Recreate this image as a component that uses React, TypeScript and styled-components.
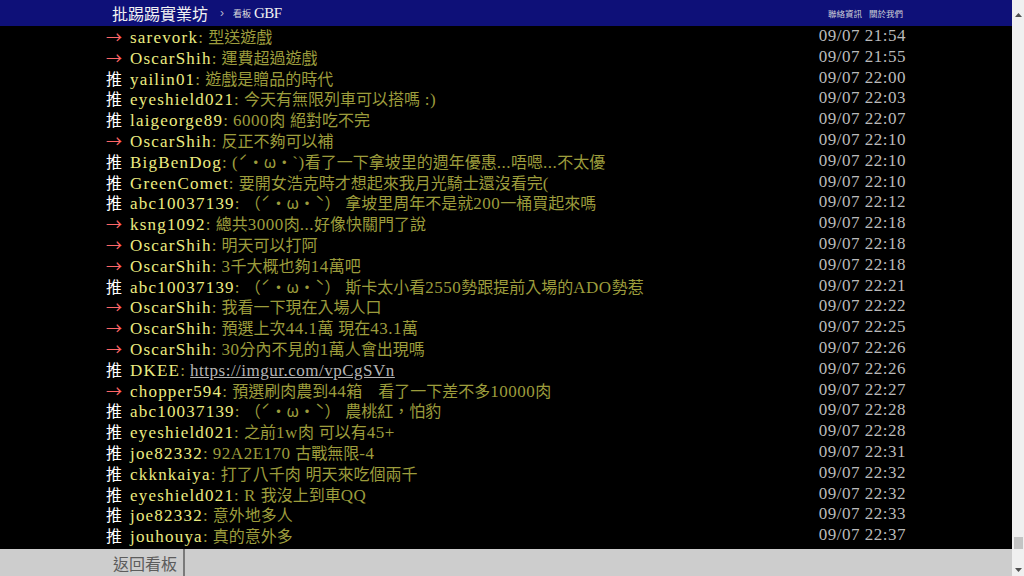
import styled, { createGlobalStyle } from 'styled-components';

const GlobalStyle = createGlobalStyle`
  html, body {
    margin: 0;
    padding: 0;
    background: #000;
    overflow: hidden;
  }
`;

type Push = {
  tag: '推' | '→';
  user: string;
  text: string;
  link?: string;
  time: string;
};

const pushes: Push[] = [
  { tag: '→', user: 'sarevork', text: ': 型送遊戲', time: '09/07 21:54' },
  { tag: '→', user: 'OscarShih', text: ': 運費超過遊戲', time: '09/07 21:55' },
  { tag: '推', user: 'yailin01', text: ': 遊戲是贈品的時代', time: '09/07 22:00' },
  { tag: '推', user: 'eyeshield021', text: ': 今天有無限列車可以搭嗎 :)', time: '09/07 22:03' },
  { tag: '推', user: 'laigeorge89', text: ': 6000肉 絕對吃不完', time: '09/07 22:07' },
  { tag: '→', user: 'OscarShih', text: ': 反正不夠可以補', time: '09/07 22:10' },
  { tag: '推', user: 'BigBenDog', text: ': (ˊ・ω・`)看了一下拿坡里的週年優惠...唔嗯...不太優', time: '09/07 22:10' },
  { tag: '推', user: 'GreenComet', text: ': 要開女浩克時才想起來我月光騎士還沒看完(', time: '09/07 22:10' },
  { tag: '推', user: 'abc10037139', text: ': （ˊ・ω・ˋ） 拿坡里周年不是就200一桶買起來嗎', time: '09/07 22:12' },
  { tag: '→', user: 'ksng1092', text: ': 總共3000肉...好像快關門了說', time: '09/07 22:18' },
  { tag: '→', user: 'OscarShih', text: ': 明天可以打阿', time: '09/07 22:18' },
  { tag: '→', user: 'OscarShih', text: ': 3千大概也夠14萬吧', time: '09/07 22:18' },
  { tag: '推', user: 'abc10037139', text: ': （ˊ・ω・ˋ） 斯卡太小看2550勢跟提前入場的ADO勢惹', time: '09/07 22:21' },
  { tag: '→', user: 'OscarShih', text: ': 我看一下現在入場人口', time: '09/07 22:22' },
  { tag: '→', user: 'OscarShih', text: ': 預選上次44.1萬 現在43.1萬', time: '09/07 22:25' },
  { tag: '→', user: 'OscarShih', text: ': 30分內不見的1萬人會出現嗎', time: '09/07 22:26' },
  { tag: '推', user: 'DKEE', text: ': ', link: 'https://imgur.com/vpCgSVn', time: '09/07 22:26' },
  { tag: '→', user: 'chopper594', text: ': 預選刷肉農到44箱　看了一下差不多10000肉', time: '09/07 22:27' },
  { tag: '推', user: 'abc10037139', text: ': （ˊ・ω・ˋ） 農桃紅，怕豹', time: '09/07 22:28' },
  { tag: '推', user: 'eyeshield021', text: ': 之前1w肉 可以有45+', time: '09/07 22:28' },
  { tag: '推', user: 'joe82332', text: ': 92A2E170 古戰無限-4', time: '09/07 22:31' },
  { tag: '推', user: 'ckknkaiya', text: ': 打了八千肉 明天來吃個兩千', time: '09/07 22:32' },
  { tag: '推', user: 'eyeshield021', text: ': R 我沒上到車QQ', time: '09/07 22:32' },
  { tag: '推', user: 'joe82332', text: ': 意外地多人', time: '09/07 22:33' },
  { tag: '推', user: 'jouhouya', text: ': 真的意外多', time: '09/07 22:37' },
  { tag: '→', user: 'OscarShih', text: ': 比預想的還多', time: '09/07 22:38' },
];

// ascii 用襯線字, 全形字用黑體
const toRuns = (s: string) => s.match(/[\x00-\x7f]+|[^\x00-\x7f]+/g) ?? [];

const App = () => (
  <>
    <GlobalStyle />
    <Page>
      <Main>
        <TopBar>
          <TopInner>
            <Crumbs>
              <Logo>批踢踢實業坊</Logo>
              <Sep>›</Sep>
              <BoardLabel>看板</BoardLabel>
              <BoardName>GBF</BoardName>
            </Crumbs>
            <TopLinks>
              <TopLink>聯絡資訊</TopLink>
              <TopLink>關於我們</TopLink>
            </TopLinks>
          </TopInner>
        </TopBar>

        <Screen>
          <Pushes>
            {pushes.map((p, i) => (
              <PushRow key={i}>
                <Left>
                  <Tag $arrow={p.tag === '→'}>{p.tag}</Tag>
                  <UserId>{p.user}</UserId>
                  <Content>
                    <Text value={p.text} />
                    {p.link && <Link>{p.link}</Link>}
                  </Content>
                </Left>
                <Time>{p.time}</Time>
              </PushRow>
            ))}
          </Pushes>
        </Screen>

        <BottomBar>
          <BottomInner>
            <BackButton>返回看板</BackButton>
          </BottomInner>
        </BottomBar>
      </Main>

      <Scrollbar>
        <ArrowBox $top>
          <svg width="7" height="4" viewBox="0 0 7 4">
            <polygon points="0,4 3.5,0 7,4" fill="#505050" />
          </svg>
        </ArrowBox>
        <Track />
        <Thumb />
        <ArrowBox>
          <svg width="7" height="4" viewBox="0 0 7 4">
            <polygon points="0,0 7,0 3.5,4" fill="#505050" />
          </svg>
        </ArrowBox>
      </Scrollbar>
    </Page>
  </>
);

const Text = ({ value }: { value: string }) => (
  <>
    {toRuns(value).map((r, i) =>
      /^[\x00-\x7f]/.test(r) ? <Latin key={i}>{r}</Latin> : <Wide key={i}>{r}</Wide>
    )}
  </>
);

const Page = styled.div`
  display: flex;
  width: 1024px;
  height: 576px;
  overflow: hidden;
`;

const Main = styled.div`
  flex: 1;
  display: flex;
  flex-direction: column;
  min-width: 0;
  background: #000;
`;

const TopBar = styled.header`
  height: 26px;
  flex-shrink: 0;
  background: #0e1078;
`;

const TopInner = styled.div`
  width: 800px;
  height: 100%;
  margin: 0 auto;
  box-sizing: border-box;
  padding: 0 3px 0 6px;
  display: flex;
  align-items: center;
  justify-content: space-between;
`;

const Crumbs = styled.div`
  display: flex;
  align-items: center;
`;

const Logo = styled.span`
  font-family: 'Noto Sans CJK TC', sans-serif;
  font-size: 16px;
  color: #f2f2f2;
`;

const Sep = styled.span`
  font-family: 'Liberation Sans', sans-serif;
  font-size: 12px;
  color: #b8b8d0;
  margin: 0 9px 0 12px;
`;

const BoardLabel = styled.span`
  font-family: 'Noto Sans CJK TC', sans-serif;
  font-size: 9px;
  color: #dcdcdc;
  margin-right: 3px;
`;

const BoardName = styled.span`
  font-family: 'Liberation Serif', serif;
  font-size: 15px;
  letter-spacing: -0.6px;
  color: #f2f2f2;
`;

const TopLinks = styled.div`
  display: flex;
  gap: 7px;
`;

const TopLink = styled.span`
  font-family: 'Noto Sans CJK TC', sans-serif;
  font-size: 8.5px;
  color: #d0d0d8;
`;

const Screen = styled.main`
  flex: 1;
  min-height: 0;
  overflow: hidden;
`;

const Pushes = styled.div`
  width: 800px;
  margin: 0 auto;
`;

const PushRow = styled.div`
  display: flex;
  justify-content: space-between;
  height: 20.8px;
  line-height: 20.8px;
  white-space: pre;
  font-family: 'Liberation Serif', 'Noto Sans CJK TC', serif;
  font-size: 16px;
`;

const Left = styled.div`
  min-width: 0;
`;

const Tag = styled.span<{ $arrow: boolean }>`
  display: inline-block;
  width: 24px;
  font-family: 'Noto Sans CJK TC', sans-serif;
  font-size: 16px;
  color: ${(p) => (p.$arrow ? '#f66' : '#fff')};
`;

const Latin = styled.span`
  font-family: 'Liberation Serif', serif;
  font-size: 17px;
  letter-spacing: 0.5px;
`;

const Wide = styled.span`
  font-family: 'Noto Sans CJK TC', sans-serif;
  font-size: 16px;
`;

const UserId = styled(Latin)`
  letter-spacing: 1.2px;
  color: #ecec80;
`;

const Content = styled.span`
  color: #9c9c3c;
`;

const Link = styled(Latin)`
  color: #b4b4b4;
  text-decoration: underline;
`;

const Time = styled(Latin)`
  color: #bbb;
`;

const BottomBar = styled.footer`
  height: 27px;
  flex-shrink: 0;
  background: #cdcdcd;
`;

const BottomInner = styled.div`
  width: 800px;
  height: 100%;
  margin: 0 auto;
  display: flex;
`;

const BackButton = styled.div`
  display: flex;
  align-items: center;
  padding: 0 6px 0 7px;
  border-right: 2px solid #7a7a7a;
  font-family: 'Noto Sans CJK TC', sans-serif;
  font-size: 16px;
  color: #5c5c5c;
`;

const Scrollbar = styled.div`
  width: 12px;
  flex-shrink: 0;
  background: #f0f0f0;
  display: flex;
  flex-direction: column;
  align-items: center;
`;

const ArrowBox = styled.div<{ $top?: boolean }>`
  height: ${(p) => (p.$top ? '17px' : '13px')};
  display: flex;
  align-items: ${(p) => (p.$top ? 'flex-end' : 'center')};
  justify-content: center;
`;

const Track = styled.div`
  flex: 1;
`;

const Thumb = styled.div`
  width: 9px;
  height: 12px;
  margin-bottom: 14px;
  background: #c4c4c4;
`;

export default App;
